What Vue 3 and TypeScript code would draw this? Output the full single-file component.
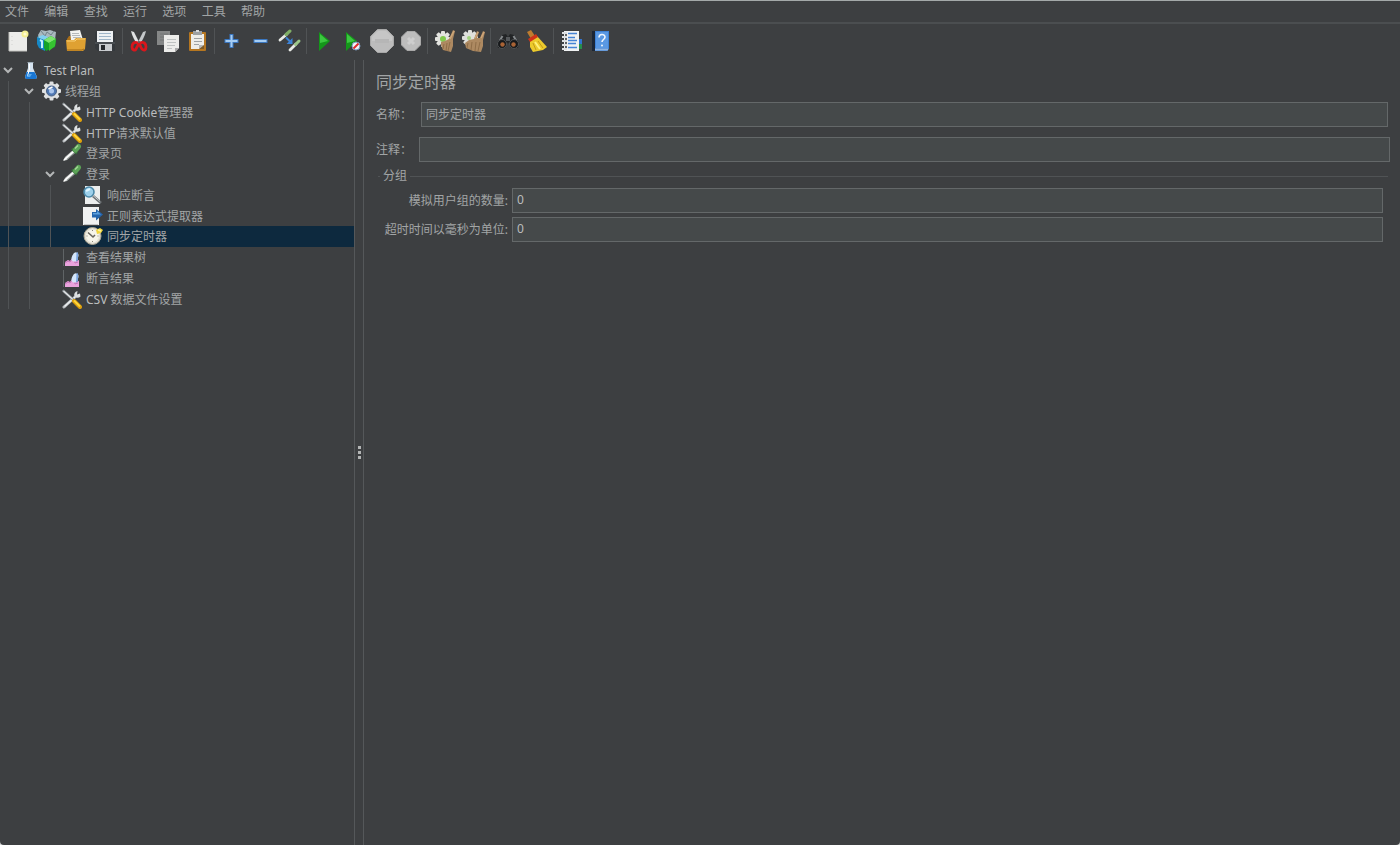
<script setup lang="ts">
import { ref } from 'vue'

interface Tool {
  icon: string
  label: string
}
interface TreeRow {
  latin?: string
  text: string
  icon: string
  depth: number
  open?: boolean
}

const menus: string[] = ['文件', '编辑', '查找', '运行', '选项', '工具', '帮助']

const groups: Tool[][] = [
  [
    { icon: 'blank', label: '新建' },
    { icon: 'templates', label: '模板' },
    { icon: 'open', label: '打开' },
    { icon: 'save', label: '保存' },
  ],
  [
    { icon: 'cut', label: '剪切' },
    { icon: 'copy', label: '复制' },
    { icon: 'paste', label: '粘贴' },
  ],
  [
    { icon: 'plus', label: '全部展开' },
    { icon: 'minus', label: '全部折叠' },
    { icon: 'toggle', label: '切换' },
  ],
  [
    { icon: 'start', label: '启动' },
    { icon: 'startNoPause', label: '不停顿启动' },
    { icon: 'stop', label: '停止' },
    { icon: 'shutdown', label: '关闭' },
  ],
  [
    { icon: 'clear', label: '清除' },
    { icon: 'clearAll', label: '清除全部' },
  ],
  [
    { icon: 'search', label: '查找' },
    { icon: 'broom', label: '重置查找' },
  ],
  [
    { icon: 'functions', label: '函数助手' },
    { icon: 'help', label: '帮助' },
  ],
]

const rows: TreeRow[] = [
  { latin: 'Test Plan', text: '', icon: 'flask', depth: 0, open: true },
  { text: '线程组', icon: 'gear', depth: 1, open: true },
  { latin: 'HTTP Cookie', text: '管理器', icon: 'config', depth: 2 },
  { latin: 'HTTP', text: '请求默认值', icon: 'config', depth: 2 },
  { text: '登录页', icon: 'sampler', depth: 2 },
  { text: '登录', icon: 'sampler', depth: 2, open: true },
  { text: '响应断言', icon: 'assertion', depth: 3 },
  { text: '正则表达式提取器', icon: 'extractor', depth: 3 },
  { text: '同步定时器', icon: 'timer', depth: 3 },
  { text: '查看结果树', icon: 'listener', depth: 2 },
  { text: '断言结果', icon: 'listener', depth: 2 },
  { latin: 'CSV ', text: '数据文件设置', icon: 'config', depth: 2 },
]

const selected = ref(8)
const name = ref('同步定时器')
const comment = ref('')
const groupSize = ref('0')
const timeout = ref('0')

const gearTeeth = (cx: number, cy: number, r: number, fill: string): string =>
  [0, 45, 90, 135]
    .map(
      (a) =>
        `<rect x="${cx - 2}" y="${cy - r}" width="4" height="${r * 2}" rx="1" fill="${fill}" transform="rotate(${a} ${cx} ${cy})"/>`,
    )
    .join('')

/* Toolbar glyphs are drawn on a 24-unit grid. */
const toolIcons: Record<string, string> = {
  blank:
    '<path d="M2 3h16l2 2v17H2z" fill="#ececea"/><path d="M2 3v19h18" fill="none" stroke="#c4c4c0"/><path d="M5 7v12" stroke="#d2d2d0" stroke-dasharray="1 3"/><circle cx="18" cy="5" r="3.500" fill="#f4ef93"/><circle cx="18" cy="5" r="1.600" fill="#fffbd0"/>',
  templates:
    '<path d="M2 6l3-5 5 1 4-1 6 2-1 8-15 1z" fill="#a9b8be"/><path d="M5 2l4 5 2-4 4 3 3-4" fill="none" stroke="#71838a"/><path d="M1 8l8 3v11l-6-3-2-4z" fill="#1688c6"/><path d="M1 8l6-2 5 2-3 3z" fill="#7fd0f0"/><path d="M4 11l2 1v7" stroke="#c3effc" stroke-width="2" fill="none"/><path d="M8 11l7-4 5 3-1 8-9 4-2-3z" fill="#14a328"/><path d="M8 11l7-4 5 3-7 4z" fill="#7ce66d"/><path d="M13 14l7-4-1 7-6 5z" fill="#36c431"/>',
  open:
    '<path d="M2 10l2-3h5l1 2h10v8H2z" fill="#a76d18"/><path d="M5 2l10-1 3 10H6z" fill="#f3f3f1"/><path d="M7 4.500h7M7 6.500h8M8 8.500h8" stroke="#b6b9bb"/><path d="M1 11h8l2-2h10l-1 11-2 2H2z" fill="#dfa132"/><path d="M2 12h8l2-2h8" fill="none" stroke="#f7cf76"/><path d="M2 21h15l2-1" stroke="#a36b14" fill="none"/>',
  save:
    '<path d="M1 4l2-2h17l1 2v18H4l-3-3z" fill="#35393d"/><path d="M3 2h16v11H3z" fill="#eef1f3"/><path d="M5 4.500h12M5 7.500h12M5 10.500h12" stroke="#9fb5c8"/><path d="M5 15h13v7H5z" fill="#c9cccf"/><path d="M7 16h4v5H7z" fill="#26292c"/><path d="M1 14h20" stroke="#5c6267"/>',
  cut:
    '<path d="M3 2l3 1 6 12-2 2C7 12 4 7 3 2z" fill="#e0e2e3"/><path d="M18 2l-3 1-6 12 2 2c3-5 6-10 7-15z" fill="#c4c8ca"/><path d="M10 14c-4-2-6 1-6 4s3 4 4 2 2-4 3-5 1 3 3 5 4 1 4-2-2-6-6-4" fill="none" stroke="#d9161c" stroke-width="2.800"/><circle cx="11" cy="13" r="1" fill="#555"/>',
  copy:
    '<path d="M0 2h13v14H0z" fill="#858787"/><path d="M3 5h8M3 8h5M3 11h5" stroke="#737575"/><path d="M7 6h15v13l-4 4H7z" fill="#ececea"/><path d="M10 10.500h9M10 13.500h9M10 16.500h8M10 19.500h5" stroke="#bfc2c2"/><path d="M18 23v-4h4z" fill="#aaa"/>',
  paste:
    '<rect x="3" y="3" width="17" height="19" rx="1" fill="#b57620"/><path d="M5 5h13v15H5z" fill="#eeeeea"/><path d="M7 2h9v4H7z" fill="#9da1a3"/><path d="M10 1h3v2h-3z" fill="#d8dadb"/><path d="M8 9.500h8M8 12.500h8M8 15.500h5" stroke="#9fa3a5"/><path d="M13 20v-4h5z" fill="#b6b8b8"/><path d="M13 20l5-4v4z" fill="#7c5a28"/>',
  plus: '<path d="M11.500 5v14M4.500 12h14" stroke="#3b77c0" stroke-width="4"/><path d="M11.500 6v12M5.500 12h12" stroke="#a6cdf3" stroke-width="2"/>',
  minus: '<path d="M4.500 12h14" stroke="#3b77c0" stroke-width="4"/><path d="M5.500 12h12" stroke="#a6cdf3" stroke-width="2"/>',
  toggle:
    '<path d="M2 11l7-6" stroke="#e9ebe7" stroke-width="2.800" stroke-linecap="round"/><path d="M8 5.500l4-3.500" stroke="#7fae66" stroke-width="3" stroke-linecap="round"/><path d="M12 21l6-6" stroke="#e9ebe7" stroke-width="2.800" stroke-linecap="round"/><path d="M17.500 15.500l3.500-3.500" stroke="#9cc688" stroke-width="3" stroke-linecap="round"/><path d="M8 8.500l4 4" stroke="#3d83d6" stroke-width="2"/><path d="M14.500 9v6h-6z" fill="#3d83d6"/>',
  start: '<path d="M7 3l11 9-11 10z" fill="#14971a"/><path d="M8 5l8 7-8 2z" fill="#3cc740"/>',
  startNoPause:
    '<path d="M5 3l11 9-11 10z" fill="#14971a"/><path d="M6 5l8 7-8 2z" fill="#3cc740"/><circle cx="15" cy="17" r="4" fill="#eef3f8" stroke="#7797bd"/><path d="M12.500 19.500l5-5" stroke="#e12b2b" stroke-width="2"/>',
  stop: '<path d="M7.500 0.500h9l7 7v9l-7 7h-9l-7-7v-9z" fill="#bcbcbc" stroke="#a8a8a8"/><path d="M8 2h8l6 6v4H2V8z" fill="#c6c6c6"/><path d="M5 12h14" stroke="#b6b6b6" stroke-width="4"/>',
  shutdown: '<path d="M8 2.500h8l5.500 5.500v8L16 21.500H8L2.500 16V8z" fill="#bdbdbd" stroke="#a9a9a9"/><path d="M9 9l6 6M15 9l-6 6" stroke="#cecece" stroke-width="3"/>',
  clear:
    gearTeeth(10, 10, 8, '#e3e4e0') +
    '<circle cx="10" cy="10" r="6" fill="#e3e4e0"/><circle cx="10" cy="10" r="3" fill="#81c94e"/><path d="M8 13l4-1 4-2 4-9 2 1-2 8v7l-2 6-8-2-2-5z" fill="#ad8961"/><path d="M11 15l-1 5M14 14l-1 8M17 13l-2 9" stroke="#8f6d48" fill="none"/><path d="M17 10l4-8" stroke="#cda679" stroke-width="1.500"/>',
  clearAll:
    gearTeeth(8, 9, 8, '#dfe0dc') +
    '<circle cx="8" cy="9" r="6" fill="#dfe0dc"/><circle cx="7" cy="9" r="2" fill="#a2d27f"/><path d="M3 14l4-3 5-1 3-8 2 1-2 6h3l3-7 2 1-2 8v6l-2 6-8-1-7-3z" fill="#ad8961"/><path d="M6 14l-1 5M10 13l-1 8M14 13l-1 9M18 13l-2 9" stroke="#8f6d48" fill="none"/><path d="M13 9l3-6M19 9l3-6" stroke="#cda679" stroke-width="1.500"/>',
  search:
    '<path d="M1 14L6 6l4-1 2 3 2-3 4 1 5 8-1 5h-7l-3-6-3 6H2z" fill="#222426"/><path d="M6.500 7l-3 5M17.500 7l3 5" stroke="#85898c" stroke-width="2"/><path d="M10 8h4v4h-4z" fill="#55585b"/><circle cx="6" cy="15" r="4.500" fill="#17191b" stroke="#505355"/><circle cx="18" cy="15" r="4.500" fill="#17191b" stroke="#505355"/><circle cx="6.500" cy="15.500" r="2.200" fill="#a96335"/><circle cx="17.500" cy="15.500" r="2.200" fill="#a96335"/>',
  broom:
    '<path d="M2 3l4-2 4 6-4 3z" fill="#bd7c2f"/><path d="M5 11l7-4 10 11-4 3-10 2-3-5z" fill="#ecca2c"/><path d="M3 10l8-5 2 3-8 5z" fill="#ce3319"/><path d="M8 14l3 7M13 12l5 7" stroke="#c29b18" fill="none"/><path d="M10 13l5 7" stroke="#fff07b" stroke-width="2"/>',
  functions:
    '<path d="M19 10h4v6h-4z" fill="#3174ce"/><path d="M19 15h4v5h-4z" fill="#268d4c"/><path d="M5 2h15v20H5z" fill="#f0f2f3"/><path d="M9 4.500h9M9 8.500h7M9 11.500h9M9 14.500h8M9 18.500h9" stroke="#4684d5" stroke-width="1.500"/><path d="M3 4h5M3 8h5M3 12h5M3 16h5M3 20h5" stroke="#dfe1e2" stroke-width="2"/><path d="M7 5v2M7 9v2M7 13v2M7 17v2" stroke="#313436" stroke-width="1.500"/>',
  help:
    '<path d="M4 2h3v20H4z" fill="#1c2635"/><path d="M7 2h14v18l-2 2H7z" fill="#3f82d5"/><path d="M8 3h12v16H8z" fill="#5a98e2"/><path d="M7 20.500h13" stroke="#8fb3df" stroke-width="2"/><path d="M11 8.500c0-4 6-4 6-.5 0 2.500-3 2.500-3 5" fill="none" stroke="#f1f6fc" stroke-width="1.600"/><circle cx="14" cy="16.500" r="1" fill="#f1f6fc"/>',
}

/* Tree glyphs are drawn on a 20-unit grid. */
const treeIcons: Record<string, string> = {
  flask:
    '<path d="M8 2h5v6l4 9-1 2H6l-1-2 3-9z" fill="#d5e3ef"/><path d="M6.500 12h8l2.500 5-1 2H6l-1-2z" fill="#1976d3"/><path d="M7.500 2.500h6" stroke="#9dabb5"/><path d="M9.500 4v5l-2 7" stroke="#fff" fill="none"/><path d="M8 14h4l-2 3H7z" fill="#58a9ee"/>',
  gear:
    gearTeeth(10.5, 10, 9.5, '#dfe1e2') +
    '<circle cx="10.500" cy="10" r="7.500" fill="#dfe1e2"/><circle cx="10.500" cy="10" r="5" fill="#4f78b4" stroke="#465f83"/><circle cx="10.500" cy="10" r="2.500" fill="#aac5ec"/><path d="M7.500 8l4-2" stroke="#fff" stroke-width="1.500"/>',
  config:
    '<path d="M2 18L13 8" stroke="#b9bdc0" stroke-width="3" stroke-linecap="round"/><path d="M2.500 17.500L13 8" stroke="#eef0f1" stroke-width="1.200"/><path d="M18 4.500l-3 1 .5-3.500a4 4 0 0 0-3 5.500 4 4 0 0 0 6 0z" fill="#dde0e1"/><path d="M1.500 2l10 9" stroke="#83898d" stroke-width="2.600" stroke-linecap="round"/><path d="M1.500 2l10 9" stroke="#e6e8e9" stroke-width="1.200"/><path d="M12 12l6 6" stroke="#dc9f0c" stroke-width="4" stroke-linecap="round"/><path d="M12 11.500l6 6" stroke="#ffd53c" stroke-width="1.800"/>',
  sampler:
    '<path d="M1 18l2-4 8-7 3 2-9 8z" fill="#c9cdcb"/><path d="M2 17L12 8" stroke="#fff" stroke-width="1.500"/><path d="M5 16.500l8-7" stroke="#7b8280"/><path d="M10 5.500l5 5" stroke="#376d3a" stroke-width="2.500"/><path d="M13.500 7l3-3.500" stroke="#5ca457" stroke-width="5" stroke-linecap="round"/><path d="M13 5.500l3-3" stroke="#a7d899" stroke-width="1.500"/>',
  assertion:
    '<path d="M2 1h15v18H2z" fill="#eceeee"/><circle cx="6" cy="7" r="5" fill="#9ed0eb" stroke="#4c89a9" stroke-width="1.600"/><path d="M3 6l4-2" stroke="#e0f6ff" stroke-width="2"/><path d="M10 11l8 7" stroke="#6c7174" stroke-width="2.600"/><path d="M10 10.500l7 6" stroke="#c4c8ca"/>',
  extractor:
    '<path d="M0 1h16v18H0z" fill="#f0f1f1"/><path d="M9 6h4V3l7 5.500-7 6v-3H9z" fill="#2465ad"/><path d="M10 7h4V5l4 3.500h-8z" fill="#5da0dd"/><path d="M1 18.500h14" stroke="#c4c6c7"/>',
  timer:
    '<circle cx="9.500" cy="10" r="8.500" fill="#e3e0d4" stroke="#aaa491"/><circle cx="9.500" cy="10" r="6.500" fill="#f7f5ea"/><path d="M5 6.500l5 4.500 2-2" fill="none" stroke="#68665f" stroke-width="1.600"/><path d="M9.500 4v1M9.500 15v1M3.500 10h1M14.500 10h1" stroke="#8b877a"/><path d="M13 4l4-2 3 2-2 3-4 1z" fill="#f1d63d"/><path d="M15 4l3 1" stroke="#fff39b" stroke-width="1.500"/>',
  listener:
    '<path d="M1.500 2v17" stroke="#606466"/><path d="M3 19v-4l3-2 2 1 4-5 2 5 3-1v6z" fill="#eaa3dd"/><path d="M3 16l3-2 2 1 3-4 2 5 3-1" stroke="#c477ba" fill="none"/><ellipse cx="13" cy="10" rx="3" ry="4.800" transform="rotate(25 13 10)" fill="#d5e6fb"/><path d="M14.500 6l1.500-1v8l-2 2z" fill="#7ba6e2"/>',
}
</script>

<template>
  <div class="app">
    <nav class="menubar" aria-label="主菜单">
      <button v-for="m in menus" :key="m" type="button" class="menu">{{ m }}</button>
    </nav>

    <div class="toolbar" role="toolbar">
      <div v-for="(group, gi) in groups" :key="gi" class="group">
        <button v-for="t in group" :key="t.icon" type="button" class="tool" :aria-label="t.label">
          <svg viewBox="0 0 24 24" aria-hidden="true" v-html="toolIcons[t.icon]"></svg>
        </button>
      </div>
    </div>

    <main class="body">
      <div class="sidebar">
        <ul class="tree" role="tree">
          <li
            v-for="(r, i) in rows"
            :key="i"
            class="row"
            :class="{ selected: selected === i }"
            role="treeitem"
            :aria-level="r.depth + 1"
            :aria-selected="selected === i"
            @click="selected = i"
          >
            <span v-for="g in r.depth" :key="g" class="guide"></span>
            <span class="twist">
              <svg v-if="r.open" viewBox="0 0 10 10" aria-hidden="true">
                <path d="M1 3l4 4 4-4" fill="none" stroke="#b4b6b7" stroke-width="2" />
              </svg>
            </span>
            <svg class="node-icon" viewBox="0 0 20 20" aria-hidden="true" v-html="treeIcons[r.icon]"></svg>
            <span class="label"><span v-if="r.latin" class="latin">{{ r.latin }}</span>{{ r.text }}</span>
          </li>
        </ul>
      </div>

      <div class="splitter" role="separator" aria-orientation="vertical">
        <i></i><i></i><i></i>
      </div>

      <section class="panel">
        <h1>同步定时器</h1>
        <div class="field name-field">
          <label for="name">名称：</label>
          <input id="name" v-model="name" type="text" />
        </div>
        <div class="field comment-field">
          <label for="comment">注释：</label>
          <input id="comment" v-model="comment" type="text" />
        </div>
        <fieldset>
          <legend>分组</legend>
          <div class="setting">
            <label for="group-size">模拟用户组的数量:</label>
            <input id="group-size" v-model="groupSize" type="text" />
          </div>
          <div class="setting">
            <label for="timeout">超时时间以毫秒为单位:</label>
            <input id="timeout" v-model="timeout" type="text" />
          </div>
        </fieldset>
      </section>
    </main>
  </div>
</template>

<style>
body {
  margin: 0;
  background: #d8dada;
}
</style>

<style scoped>
.app {
  display: flex;
  flex-direction: column;
  box-sizing: border-box;
  min-height: 100vh;
  border-top: 1px solid #a4a9a9;
  border-radius: 0 0 4px 4px;
  background: #3d3f41;
  color: #a2a5a6;
  font: 12px/20px 'Noto Sans', 'Noto Sans CJK SC', sans-serif;
}
button,
input {
  font: inherit;
  color: inherit;
}
.menubar {
  display: flex;
  justify-content: space-between;
  align-items: center;
  width: 260px;
  height: 21px;
  padding-left: 5px;
}
.menu,
.tool {
  padding: 0;
  border: 0;
  background: none;
}
.toolbar {
  display: flex;
  height: 34px;
  padding: 0 4px 2px;
  border-top: 2px solid #4b4e50;
}
.group {
  display: flex;
  align-items: center;
}
.group + .group::before {
  content: '';
  width: 1px;
  height: 26px;
  margin: 0 2px;
  background: #505355;
}
.tool {
  display: flex;
  justify-content: center;
  width: 29px;
}
.tool svg {
  width: 24px;
  height: 24px;
}
.body {
  display: flex;
  flex: 1;
}
.sidebar {
  flex: 0 0 354px;
}
.tree {
  display: grid;
  grid-auto-rows: 1fr;
  height: 249px;
  margin: 0;
  padding: 0;
  list-style: none;
}
.row {
  display: flex;
  align-items: center;
  min-height: 0;
}
.row.selected {
  background: #0d293e;
}
.guide,
.twist {
  flex: 0 0 21px;
  align-self: stretch;
  box-sizing: border-box;
}
.guide {
  background: linear-gradient(#505355, #505355) 8px 0 / 1px 100% no-repeat;
}
.twist {
  display: flex;
  flex-basis: 20px;
  align-items: center;
  padding-left: 3px;
}
.twist svg {
  width: 10px;
  height: 10px;
}
.node-icon {
  flex: none;
  width: 20px;
  height: 20px;
}
.label {
  padding: 2px 0 0 4px;
  white-space: pre;
}
.latin {
  color: #bbbdbe;
}
.splitter {
  display: flex;
  flex: 0 0 8px;
  flex-direction: column;
  align-items: center;
  justify-content: center;
  gap: 2px;
  border: solid #55585a;
  border-width: 0 1px;
}
.splitter i {
  width: 3px;
  height: 3px;
  background: #b3b5b5;
}
.panel {
  flex: 1;
  min-width: 0;
  padding: 10px 10px 0 12px;
}
h1 {
  margin: 0 0 8px;
  font-size: 16px;
  font-weight: 400;
  line-height: 24px;
}
.field,
.setting {
  display: flex;
  align-items: center;
}
.field label {
  flex: 0 0 45px;
}
.name-field {
  padding-right: 2px;
}
.comment-field {
  margin-top: 10px;
}
.comment-field label {
  flex-basis: 43px;
}
input {
  flex: 1;
  box-sizing: border-box;
  min-width: 0;
  height: 25px;
  padding: 0 4px 2px;
  border: 1px solid #646869;
  outline: 0;
  background: #45494a;
}
fieldset {
  min-width: 0;
  margin: 4px 2px 0;
  padding: 2px 5px 0 0;
  border: 0;
  border-top: 1px solid #505355;
}
legend {
  margin-left: 2px;
  padding: 0 3px;
}
.setting + .setting {
  margin-top: 4px;
}
.setting label {
  flex: 0 0 130px;
  text-align: right;
}
.setting input {
  margin-left: 4px;
  color: #bbbdbe;
}
</style>
